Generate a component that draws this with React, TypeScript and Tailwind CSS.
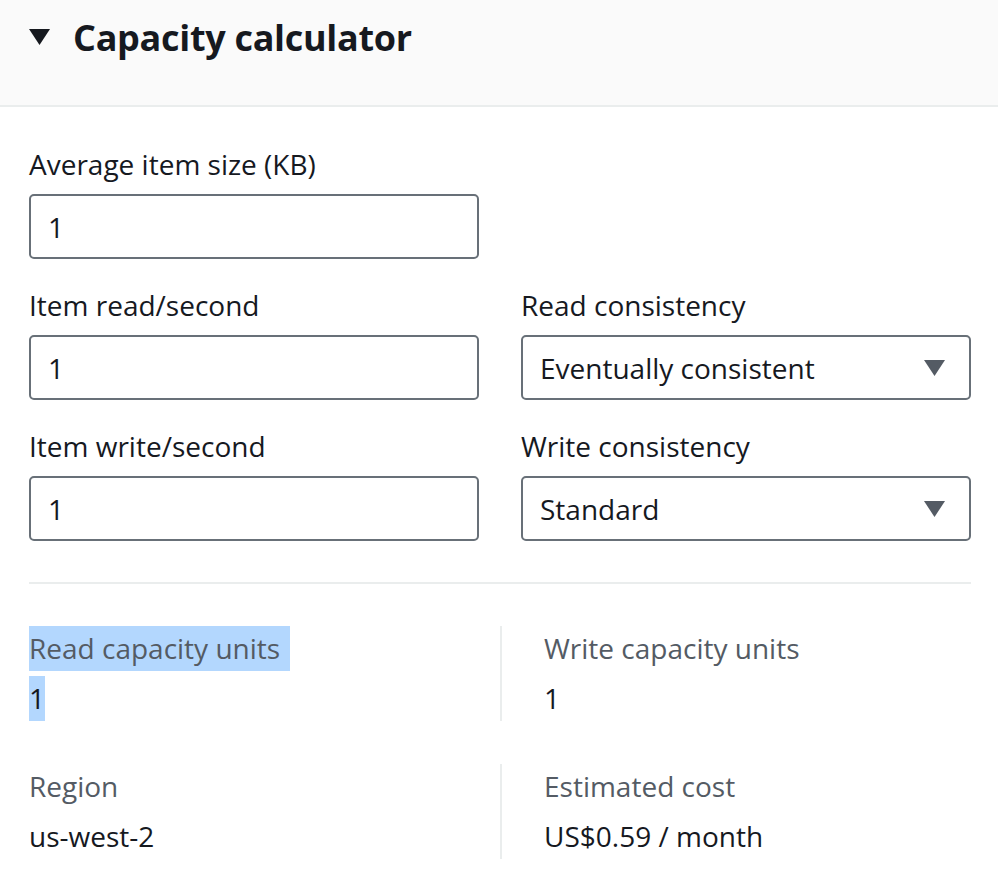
import React from "react";

const fieldLabel = "text-[28px] leading-[44px] text-[#16191f]";
const boxCls =
  "h-[65px] w-full rounded-[5px] border-2 border-[#687078] bg-white flex items-center pl-[17px] pr-[24px] text-[28px] text-[#16191f]";

const Field = ({ label, value }: { label: string; value: string }) => {
  return (
    <div className="flex flex-col">
      <div className={fieldLabel}>{label}</div>
      <div className={`mt-[8px] ${boxCls}`}>{value}</div>
    </div>
  );
};

const SelectField = ({ label, value }: { label: string; value: string }) => {
  return (
    <div className="flex flex-col">
      <div className={fieldLabel}>{label}</div>
      <div className={`mt-[8px] justify-between ${boxCls}`}>
        <span>{value}</span>
        <svg width="21" height="16" viewBox="0 0 21 16">
          <polygon points="0,0 21,0 10.5,16" fill="#545b64" />
        </svg>
      </div>
    </div>
  );
};

const Stat = ({
  label,
  value,
  selected,
}: {
  label: string;
  value: string;
  selected?: boolean;
}) => {
  return (
    <div className="flex flex-col items-start">
      <span
        className={`text-[28px] leading-[45px] text-[#545b64] ${
          selected ? "bg-[#b3d7fe] pr-[10px]" : ""
        }`}
      >
        {label}
      </span>
      <span
        className={`mt-[5px] text-[28px] leading-[45px] text-[#16191f] ${
          selected ? "bg-[#b3d7fe]" : ""
        }`}
      >
        {value}
      </span>
    </div>
  );
};

const App = () => {
  return (
    <div
      className="w-[998px] h-[877px] bg-white overflow-hidden"
      style={{ fontFamily: '"Open Sans", "Noto Sans", sans-serif' }}
    >
      <div className="h-[107px] bg-[#fafafa] border-b-2 border-[#eaeded] flex items-start pl-[29px] pt-[14px]">
        <svg width="21" height="16" viewBox="0 0 21 16" className="mt-[15px]">
          <polygon points="0,0 21,0 10.5,16" fill="#16191f" />
        </svg>
        <h1 className="ml-[23px] text-[36px] leading-[48px] font-bold text-[#16191f] tracking-[-0.3px]">
          Capacity calculator
        </h1>
      </div>

      <div className="pl-[29px] pr-[27px] pt-[35px]">
        <div className="grid grid-cols-2 gap-x-[42px] gap-y-[24px]">
          <Field label="Average item size (KB)" value="1" />
          <div />
          <Field label="Item read/second" value="1" />
          <SelectField label="Read consistency" value="Eventually consistent" />
          <Field label="Item write/second" value="1" />
          <SelectField label="Write consistency" value="Standard" />
        </div>

        <div className="mt-[41px] border-t-2 border-[#eaeded]" />

        <div className="mt-[42px] grid grid-cols-[471px_1fr] gap-y-[43px]">
          <Stat label="Read capacity units" value="1" selected />
          <div className="border-l-2 border-[#eaeded] pl-[42px]">
            <Stat label="Write capacity units" value="1" />
          </div>
          <Stat label="Region" value="us-west-2" />
          <div className="border-l-2 border-[#eaeded] pl-[42px]">
            <Stat label="Estimated cost" value="US$0.59 / month" />
          </div>
        </div>
      </div>
    </div>
  );
};

export default App;
